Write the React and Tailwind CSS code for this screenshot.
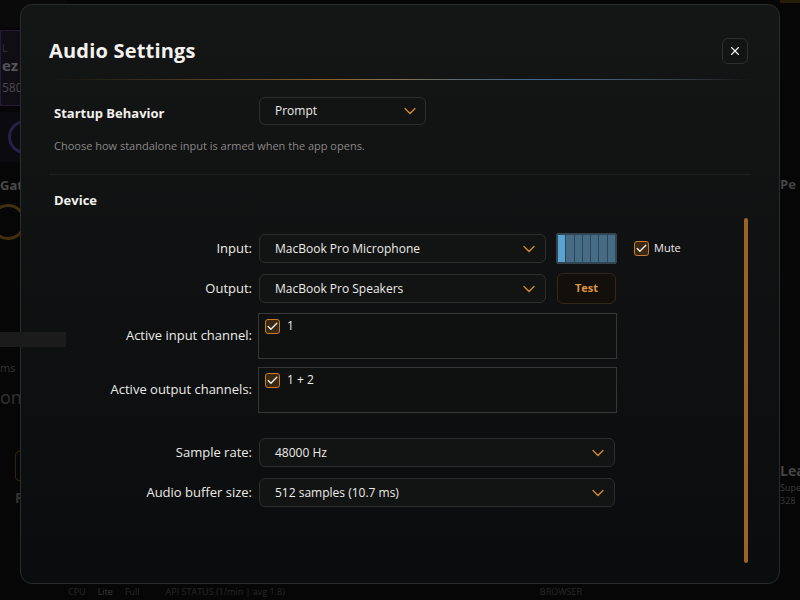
import {ChevronDown, X, Check} from "lucide-react";

const font = {fontFamily: '"Open Sans", "Liberation Sans", sans-serif'};

function Chevron() {
  return <ChevronDown className="h-[20px] w-[20px] text-[#d58b2c]" strokeWidth={1.6} />;
}

function Select({value, width}) {
  return (
    <div className={`flex h-[29px] items-center justify-between rounded-[6px] border border-[#2c2d2d] bg-[#121313] pl-[15px] pr-[6px] ${width}`}>
      <span className="text-[12px] text-[#ecebe8]">{value}</span>
      <Chevron />
    </div>
  );
}

function Checkbox() {
  return (
    <div className="flex h-[15px] w-[15px] items-center justify-center rounded-[3px] border border-[#c47d2c] bg-[#3a2813]">
      <Check className="h-[13px] w-[13px] text-[#f2efe9]" strokeWidth={2.5} />
    </div>
  );
}

function Row({label, children, className = ""}) {
  return (
    <div className={`flex items-center ${className}`}>
      <div className="w-[198px] text-right text-[13px] text-[#ecebe8]">{label}</div>
      <div className="ml-[7px] flex items-center">{children}</div>
    </div>
  );
}

function ChannelBox({value}) {
  return (
    <div className="h-[46px] w-[359px] border border-[#363737] bg-[#0f1010] pl-[6px] pt-[3px]">
      <div className="flex items-center gap-[7px]">
        <Checkbox />
        <span className="text-[12px] text-[#ecebe8]">{value}</span>
      </div>
    </div>
  );
}

export default function App() {
  return (
    <div className="relative h-[600px] w-[800px] overflow-hidden bg-[#060606]" style={font}>
      {/* dimmed app behind */}
      <div className="flex h-full w-full justify-between">
        <div className="flex w-[66px] flex-col">
          <div className="h-[28px] bg-[#0a0a0a]" />
          <div className="mt-[2px] flex h-[76px] flex-col rounded-r-[4px] border border-[#241c36] bg-[#100d15] pl-[1px] pt-[10px]">
            <span className="text-[11px] leading-[14px] text-[#333]">L</span>
            <span className="text-[15px] font-bold leading-[20px] text-[#555]">ez</span>
            <span className="mt-[4px] text-[12px] text-[#4a4a4a]">5808</span>
          </div>
          <div className="mt-[6px] h-[50px] bg-[#0b0a0e] pl-[8px] pt-[8px]">
            <div className="h-[34px] w-[34px] rounded-full border-[3px] border-[#26204a]" />
          </div>
          <span className="mt-[14px] text-[13px] font-bold text-[#4a4a4a]">Gate</span>
          <div className="mt-[8px] h-[36px] w-[36px] rounded-full border-[3px] border-[#40300f] -ml-[10px]" />
          <div className="mt-[120px] text-[11px] text-[#333]">ms</div>
          <div className="mt-[8px] text-[18px] text-[#333]">one</div>
          <div className="mt-[40px] ml-[15px] h-[30px] w-[30px] rounded-[4px] border border-[#33250e]" />
          <div className="mt-[6px] ml-[15px] text-[14px] font-bold text-[#333]">F</div>
        </div>
        <div className="flex w-[20px] flex-col overflow-hidden">
          <div className="h-[3px] bg-[#2a1c0a]" />
          <span className="mt-[172px] text-[13px] font-bold text-[#444]">Pe</span>
          <span className="mt-[265px] whitespace-nowrap text-[14px] font-bold text-[#444]">Lea</span>
          <span className="text-[9px] text-[#3a3a3a]">Supe</span>
          <span className="text-[9px] text-[#3a3a3a]">328</span>
        </div>
      </div>
      <div className="absolute bottom-[2px] left-[68px] flex gap-[12px] text-[9px] text-[#262626]">
        <span>CPU</span>
        <span className="text-[#3a3a3a]">Lite</span>
        <span>Full</span>
        <span className="ml-[14px]">API STATUS (1/min | avg 1.8)</span>
        <span className="ml-[243px]">BROWSER</span>
      </div>

      {/* modal */}
      <div className="absolute left-[20px] top-[4px] flex h-[580px] w-[760px] flex-col rounded-[12px] border border-[#2a2b2b] bg-gradient-to-b from-[#141515] to-[#0b0c0d]">
        <div className="flex items-center justify-between pl-[28px] pr-[31px] pt-[31px]">
          <h1 className="text-[20px] font-bold tracking-[0.2px] text-[#f4f2ee]">Audio Settings</h1>
          <button className="flex h-[26px] w-[26px] items-center justify-center rounded-[6px] border border-[#2e2f2f] bg-[#121313]">
            <X className="h-[14px] w-[14px] text-[#f2f0ec]" strokeWidth={2} />
          </button>
        </div>
        <div className="mx-[32px] mt-[13px] h-px bg-gradient-to-r from-transparent via-[#a8752f] to-transparent">
          <div className="ml-[280px] h-px w-[420px] bg-gradient-to-r from-transparent via-[#3e6a9a] to-transparent" />
        </div>

        <div className="mt-[17px] flex items-center pl-[33px]">
          <span className="mt-[5px] w-[205px] text-[13px] font-bold text-[#f2f0ec]">Startup Behavior</span>
          <div className="flex h-[28px] w-[167px] items-center justify-between rounded-[6px] border border-[#2c2d2d] bg-[#121313] pl-[15px] pr-[5px]">
            <span className="text-[12px] text-[#ecebe8]">Prompt</span>
            <Chevron />
          </div>
        </div>
        <p className="mt-[13px] pl-[33px] text-[11px] text-[#8a8886]">
          Choose how standalone input is armed when the app opens.
        </p>
        <div className="mx-[28px] mt-[19px] h-px bg-[#1f2020]" />
        <div className="mt-[16px] pl-[33px] text-[13px] font-bold text-[#f2f0ec]">Device</div>

        <div className="flex flex-1">
          <div className="flex flex-1 flex-col pl-[33px] pt-[23px]">
            <Row label="Input:">
              <Select value="MacBook Pro Microphone" width="w-[287px]" />
              <div className="ml-[10px] flex h-[31px] w-[61px] gap-[1px] rounded-[2px] border border-[#36424e] bg-[#2f4656] p-[1px]">
                <div className="flex-1 bg-[#5aa2cf]" />
                <div className="flex-1 bg-[#466b84]" />
                <div className="flex-1 bg-[#466b84]" />
                <div className="flex-1 bg-[#466b84]" />
                <div className="flex-1 bg-[#466b84]" />
                <div className="flex-1 bg-[#466b84]" />
                <div className="flex-1 bg-[#466b84]" />
              </div>
              <div className="ml-[17px] flex items-center gap-[5px]">
                <Checkbox />
                <span className="text-[11px] text-[#ecebe8]">Mute</span>
              </div>
            </Row>
            <Row label="Output:" className="mt-[9px]">
              <Select value="MacBook Pro Speakers" width="w-[287px]" />
              <button className="ml-[11px] h-[31px] w-[59px] rounded-[6px] border border-[#33281a] bg-[#130f0a] text-[11px] font-bold text-[#dc9540]">
                Test
              </button>
            </Row>
            <Row label="Active input channel:" className="mt-[9px]">
              <div className="-ml-[1px]"><ChannelBox value="1" /></div>
            </Row>
            <Row label="Active output channels:" className="mt-[8px]">
              <div className="-ml-[1px]"><ChannelBox value="1 + 2" /></div>
            </Row>
            <Row label="Sample rate:" className="mt-[25px]">
              <Select value="48000 Hz" width="w-[356px]" />
            </Row>
            <Row label="Audio buffer size:" className="mt-[11px]">
              <Select value="512 samples (10.7 ms)" width="w-[356px]" />
            </Row>
          </div>
          <div className="mr-[31px] mt-[8px] mb-[20px] w-[4px] rounded-full bg-[#9c6228]" />
        </div>
      </div>

      <div className="absolute left-0 top-[332px] h-[15px] w-[66px] bg-[#1b1b1b]" />
    </div>
  );
}
